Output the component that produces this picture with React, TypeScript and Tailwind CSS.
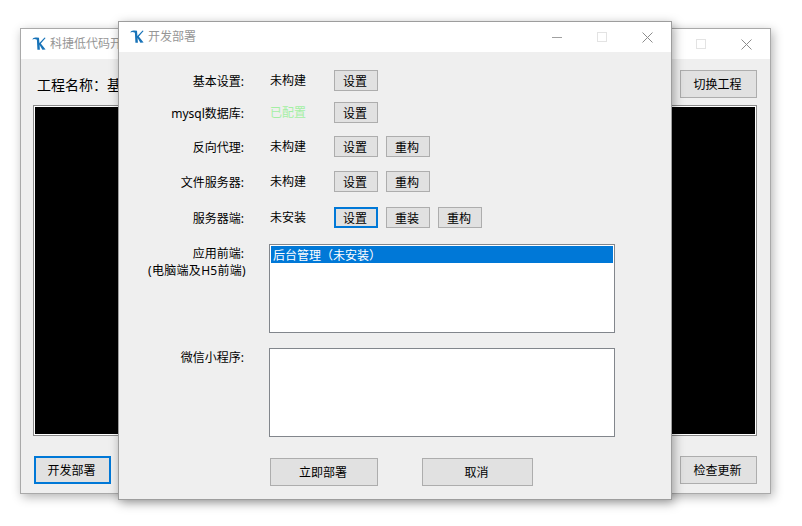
const font = { fontFamily: '"Noto Sans", "Noto Sans CJK SC", sans-serif' };

function Logo() {
  return (
    <svg width="14" height="14" viewBox="0 0 14 14" className="shrink-0">
      <path d="M0.3 2.6 C0.8 0.8 2.6 0.2 4.6 0.6 L7 0.8 L7.4 6 L12.6 0.6 L13.6 1 L8.8 6.6 L13.6 12.6 L10.4 12.8 L7.6 8 L7.9 12.8 L5.4 12.8 L4.9 2.8 C3.4 1.9 1.6 1.9 0.3 2.6 Z" fill="#1873b8" />
    </svg>
  );
}

function TitleBar({ title, showMin }: { title: string; showMin: boolean }) {
  return (
    <div className="h-[30px] bg-white flex items-center pl-[11px] shrink-0">
      <Logo />
      <span className="ml-[4px] text-[12px] text-[#969696] leading-none whitespace-nowrap">{title}</span>
      <div className="ml-auto flex items-center h-full">
        {showMin && <div className="w-[10px] h-px bg-[#a0a0a0] mr-[35px]" />}
        <div className="w-[10px] h-[10px] border border-[#e3e3e3] mr-[35px]" />
        <svg width="11" height="11" viewBox="0 0 11 11" className="mr-[18px]">
          <path d="M0.5 0.5 L10.5 10.5 M10.5 0.5 L0.5 10.5" stroke="#8c8c8c" strokeWidth="1" />
        </svg>
      </div>
    </div>
  );
}

function Btn({ children, w = "w-[44px]", h = "h-[21px]", focus = false }: { children?: string; w?: string; h?: string; focus?: boolean }) {
  return (
    <div
      className={`${w} ${h} shrink-0 flex items-center justify-center pr-[2px] pt-[2px] bg-[#e1e1e1] text-[12px] text-black leading-none ${
        focus ? "border-2 border-[#0078d7]" : "border border-[#adadad]"
      }`}
    >
      {children}
    </div>
  );
}

function Label({ text, extra = "" }: { text: string; extra?: string }) {
  return (
    <div className={`w-[127px] text-right text-[12px] text-black whitespace-nowrap pr-[2px] ${extra}`}>{text}:</div>
  );
}

function Row({ label, status, mt, green = false, buttons }: { label: string; status: string; mt: string; green?: boolean; buttons: { t: string; focus?: boolean }[] }) {
  return (
    <div className={`flex items-center h-[21px] ${mt}`}>
      <Label text={label} extra="pt-[2px]" />
      <div className={`ml-[24px] w-[64px] text-[12px] pt-[1px] ${green ? "text-[#a4efa4]" : "text-black"}`}>{status}</div>
      <div className="flex gap-[8px]">
        {buttons.map((b, i) => (
          <Btn key={i} focus={b.focus}>{b.t}</Btn>
        ))}
      </div>
    </div>
  );
}

export default function App() {
  return (
    <div className="relative w-[802px] h-[526px] bg-white overflow-hidden" style={font}>
      {/* main window */}
      <div className="absolute left-[20px] top-[28px] w-[751px] h-[466px] border border-[#a9a9a9] bg-[#efefef] shadow-[2px_3px_10px_rgba(0,0,0,0.3)] flex flex-col">
        <TitleBar title="科捷低代码开" showMin={false} />
        <div className="flex-1 flex flex-col pl-[12px] pr-[13px]">
          <div className="flex items-center justify-between mt-[11px] pl-[4px]">
            <span className="text-[14px] text-black whitespace-nowrap">工程名称：基</span>
            <Btn w="w-[77px]" h="h-[28px]">切换工程</Btn>
          </div>
          <div className="mt-[7px] h-[331px] border border-[#8a8a8a] bg-black outline outline-1 -outline-offset-2 outline-white" />
          <div className="mt-[20px] flex pl-[1px]">
            <Btn w="w-[77px]" h="h-[28px]" focus>开发部署</Btn>
            <div className="ml-auto mr-[8px]">
              <Btn w="w-[77px]" h="h-[28px]" />
            </div>
            <Btn w="w-[77px]" h="h-[28px]">检查更新</Btn>
          </div>
        </div>
      </div>

      {/* dialog */}
      <div className="absolute left-[118px] top-[21px] w-[554px] h-[479px] border border-[#9d9d9d] bg-[#efefef] shadow-[2px_3px_10px_rgba(0,0,0,0.35)] flex flex-col">
        <TitleBar title="开发部署" showMin />
        <div className="flex-1 flex flex-col">
          <Row mt="mt-[18px]" label="基本设置" status="未构建" buttons={[{ t: "设置" }]} />
          <Row mt="mt-[11px]" label="mysql数据库" status="已配置" green buttons={[{ t: "设置" }]} />
          <Row mt="mt-[13px]" label="反向代理" status="未构建" buttons={[{ t: "设置" }, { t: "重构" }]} />
          <Row mt="mt-[14px]" label="文件服务器" status="未构建" buttons={[{ t: "设置" }, { t: "重构" }]} />
          <Row mt="mt-[15px]" label="服务器端" status="未安装" buttons={[{ t: "设置", focus: true }, { t: "重装" }, { t: "重构" }]} />
          <div className="flex mt-[16px]">
            <div className="w-[127px] text-right text-[12px] leading-[17px] text-black whitespace-nowrap pt-[1px]">
              <div className="pr-[2px]">应用前端:</div>
              <div className="tracking-[0.3px]">(电脑端及H5前端)</div>
            </div>
            <div className="ml-[23px] w-[346px] h-[89px] border border-[#82868c] bg-white p-px">
              <div className="h-[17px] bg-[#0078d7] text-white text-[12px] leading-[19px] pl-[2px]">后台管理（未安装）</div>
            </div>
          </div>
          <div className="flex mt-[15px]">
            <Label text="微信小程序" extra="pt-[1px]" />
            <div className="ml-[23px] w-[346px] h-[89px] border border-[#82868c] bg-white" />
          </div>
          <div className="flex mt-[21px] ml-[151px] gap-[44px]">
            <Btn w="w-[108px]" h="h-[28px]">立即部署</Btn>
            <Btn w="w-[111px]" h="h-[28px]">取消</Btn>
          </div>
        </div>
      </div>
    </div>
  );
}
